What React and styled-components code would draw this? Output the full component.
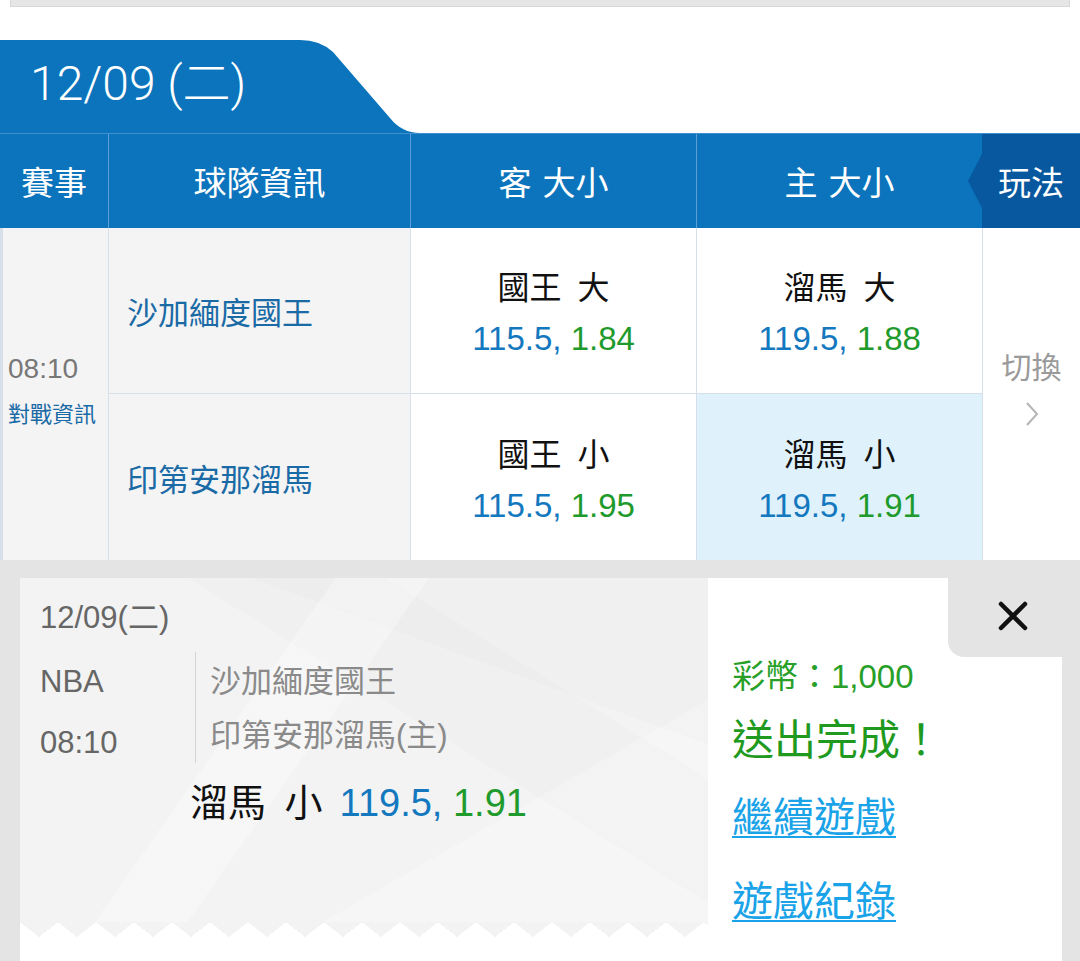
import React from 'react'
import styled, { createGlobalStyle } from 'styled-components'

const GlobalStyle = createGlobalStyle`
  html, body { margin: 0; padding: 0; background: #fff; }
  body { font-family: "Liberation Sans", "Noto Sans CJK TC", sans-serif; }
  * { box-sizing: border-box; }
`

const blue = '#0b74bc'
const numBlue = '#1478bf'
const numGreen = '#1f9a2c'

const Page = styled.div`
  width: 1080px;
  overflow: hidden;
`
const TopStrip = styled.div`
  margin: 0 10px;
  height: 7px;
  background: #e6e6e6;
  border: 1px solid #d8d8d8;
  border-top: none;
`
const Tab = styled.div`
  margin-top: 33px;
  width: 420px;
  height: 93px;
  background: ${blue};
  clip-path: path('M0 0 H300 Q320 0 333 12 L390 78 Q402 93 420 93 H0 Z');
  color: #fff;
  font-family: Roboto, "Noto Sans CJK TC", sans-serif;
  font-weight: 300;
  font-size: 48px;
  line-height: 87px;
  padding-left: 30px;
`
const HeadRow = styled.div`
  display: grid;
  grid-template-columns: 108px 302px 286px 286px 98px;
  height: 95px;
  background: ${blue};
  border-top: 1px solid #3f8fcf;
`
const HeadCell = styled.div`
  position: relative;
  display: flex;
  align-items: center;
  justify-content: center;
  color: #fff;
  font-size: 33px;
  word-spacing: 2px;
  border-left: ${p => (p.$first ? 'none' : '1px solid #5b9fd6')};
  background: ${p => (p.$dark ? '#07589f' : 'transparent')};

  ${p => p.$dark && `
    border-left: none;
    &::before {
      content: '';
      position: absolute;
      left: -14px;
      top: 18px;
      width: 15px;
      height: 58px;
      background: #07589f;
      clip-path: polygon(100% 0, 0 50%, 100% 100%);
    }
  `}
`
const Board = styled.div`
  display: grid;
  grid-template-columns: 108px 302px 286px 286px 98px;
  grid-template-rows: 166px 166px;
`
const MatchCell = styled.div`
  grid-column: 1;
  grid-row: 1 / span 2;
  background: #f4f4f4;
  border-left: 3px solid #d7e0e8;
  display: flex;
  flex-direction: column;
  justify-content: center;
  padding: 0 0 6px 5px;
`
const Time = styled.div`
  color: #777;
  font-size: 28px;
  line-height: 34px;
`
const VsInfo = styled.div`
  color: #1a6aa6;
  font-size: 22px;
  line-height: 30px;
  margin-top: 14px;
`
const TeamCell = styled.div`
  background: #f4f4f4;
  border-left: 1px solid #d7e0e8;
  border-bottom: ${p => (p.$top ? '1px solid #d7e0e8' : 'none')};
  display: flex;
  align-items: center;
  padding-left: 18px;
  color: #1a6aa6;
  font-size: 31px;
`
const OddsCell = styled.div`
  background: ${p => (p.$picked ? '#dff2fb' : '#fff')};
  border-left: 1px solid #d7e0e8;
  border-bottom: ${p => (p.$top ? '1px solid #d7e0e8' : 'none')};
  display: flex;
  flex-direction: column;
  align-items: center;
  justify-content: center;
  padding-top: 6px;
  gap: 7px;
`
const OddsLabel = styled.div`
  color: #111;
  font-size: 32px;
  line-height: 44px;
  word-spacing: 7px;
`
const OddsNums = styled.div`
  font-size: 33px;
  line-height: 44px;
`
const Line = styled.span`
  color: ${numBlue};
`
const Price = styled.span`
  color: ${numGreen};
`
const SwitchCell = styled.div`
  grid-column: 5;
  grid-row: 1 / span 2;
  background: #fff;
  border-left: 1px solid #d7e0e8;
  display: flex;
  flex-direction: column;
  align-items: center;
  justify-content: center;
  gap: 12px;
  color: #9a9a9a;
  font-size: 30px;
  line-height: 40px;
  padding-bottom: 12px;
`
const Bottom = styled.div`
  background: #e4e4e4;
  padding: 18px 18px 0 20px;
`
const Ticket = styled.div`
  display: flex;
  background: #fff;
  min-height: 420px;
`
const TicketLeft = styled.div`
  width: 688px;
  display: flex;
  flex-direction: column;
`
const TicketBody = styled.div`
  height: 344px;
  padding: 20px 0 0 20px;
  background:
    linear-gradient(125deg, rgba(255,255,255,0) 0 34%, rgba(255,255,255,.3) 34% 44%, rgba(255,255,255,0) 44%),
    linear-gradient(200deg, rgba(0,0,0,.01) 0 28%, rgba(0,0,0,0) 28%),
    linear-gradient(32deg, rgba(0,0,0,0) 0 58%, rgba(0,0,0,.01) 58% 74%, rgba(0,0,0,0) 74%),
    linear-gradient(150deg, rgba(0,0,0,0) 0 70%, rgba(255,255,255,.25) 70%),
    #f3f3f3;
`
const Zigzag = styled.div`
  height: 15px;
  background: conic-gradient(from -52deg at 50% 100%, #f3f3f3 104deg, transparent 0) 0 0 / 38px 15px repeat-x;
`
const DateLine = styled.div`
  color: #666;
  font-size: 31px;
  line-height: 40px;
`
const InfoBlock = styled.div`
  display: flex;
  margin-top: 14px;
`
const MetaCol = styled.div`
  width: 155px;
  padding-top: 10px;
  display: flex;
  flex-direction: column;
  gap: 21px;
  color: #666;
  font-size: 31px;
  line-height: 40px;
`
const TeamsCol = styled.div`
  border-left: 1px solid #d4d4d4;
  padding: 10px 0 0 14px;
  display: flex;
  flex-direction: column;
  gap: 14px;
  color: #8a8a8a;
  font-size: 31px;
  line-height: 40px;
`
const PickLine = styled.div`
  margin: 15px 0 0 150px;
  font-size: 38px;
  line-height: 50px;
  color: #111;
`
const PickLabel = styled.span`
  word-spacing: 8px;
  margin-right: 17px;
`
const TicketRight = styled.div`
  flex: 1;
  display: flex;
  flex-direction: column;
`
const CloseRow = styled.div`
  display: flex;
  justify-content: flex-end;
`
const CloseButton = styled.div`
  width: 114px;
  height: 79px;
  background: #e4e4e4;
  border-bottom-left-radius: 16px;
  display: flex;
  align-items: center;
  justify-content: center;
  padding: 0 0 4px 16px;
`
const Result = styled.div`
  padding-left: 24px;
  display: flex;
  flex-direction: column;
`
const Coins = styled.div`
  color: #28a028;
  font-size: 33px;
  line-height: 40px;
`
const Done = styled.div`
  color: #1f9a1f;
  font-size: 42px;
  line-height: 56px;
  margin-top: 16px;
`
const LinkText = styled.a`
  color: #1aa3e8;
  font-size: 41px;
  line-height: 56px;
  text-decoration: underline;
  text-decoration-thickness: 2px;
  text-underline-offset: 4px;
  margin-top: ${p => p.$gap}px;
`

const rows = [
  {
    team: '沙加緬度國王',
    away: { label: '國王 大', line: '115.5', odds: '1.84' },
    home: { label: '溜馬 大', line: '119.5', odds: '1.88' },
  },
  {
    team: '印第安那溜馬',
    away: { label: '國王 小', line: '115.5', odds: '1.95' },
    home: { label: '溜馬 小', line: '119.5', odds: '1.91', picked: true },
  },
]

function Odds({ item, top }) {
  return (
    <OddsCell $top={top} $picked={item.picked}>
      <OddsLabel>{item.label}</OddsLabel>
      <OddsNums>
        <Line>{item.line}, </Line>
        <Price>{item.odds}</Price>
      </OddsNums>
    </OddsCell>
  )
}

export default function App() {
  return (
    <Page>
      <GlobalStyle />
      <TopStrip />
      <Tab>12/09 (二)</Tab>
      <HeadRow>
        <HeadCell $first>賽事</HeadCell>
        <HeadCell>球隊資訊</HeadCell>
        <HeadCell>客 大小</HeadCell>
        <HeadCell>主 大小</HeadCell>
        <HeadCell $dark>玩法</HeadCell>
      </HeadRow>
      <Board>
        <MatchCell>
          <Time>08:10</Time>
          <VsInfo>對戰資訊</VsInfo>
        </MatchCell>
        {rows.map((r, i) => (
          <React.Fragment key={r.team}>
            <TeamCell $top={i === 0}>{r.team}</TeamCell>
            <Odds item={r.away} top={i === 0} />
            <Odds item={r.home} top={i === 0} />
          </React.Fragment>
        ))}
        <SwitchCell>
          <span>切換</span>
          <svg width="16" height="28" viewBox="0 0 16 28">
            <polyline points="3,3 13,14 3,25" fill="none" stroke="#b5b5b5" strokeWidth="2" />
          </svg>
        </SwitchCell>
      </Board>
      <Bottom>
        <Ticket>
          <TicketLeft>
            <TicketBody>
              <DateLine>12/09(二)</DateLine>
              <InfoBlock>
                <MetaCol>
                  <span>NBA</span>
                  <span>08:10</span>
                </MetaCol>
                <TeamsCol>
                  <span>沙加緬度國王</span>
                  <span>印第安那溜馬(主)</span>
                </TeamsCol>
              </InfoBlock>
              <PickLine>
                <PickLabel>溜馬 小</PickLabel>
                <Line>119.5, </Line>
                <Price>1.91</Price>
              </PickLine>
            </TicketBody>
            <Zigzag />
          </TicketLeft>
          <TicketRight>
            <CloseRow>
              <CloseButton>
                <svg width="30" height="30" viewBox="0 0 30 30">
                  <path d="M3 3 L27 27 M27 3 L3 27" stroke="#111" strokeWidth="4.5" strokeLinecap="round" />
                </svg>
              </CloseButton>
            </CloseRow>
            <Result>
              <Coins>彩幣：1,000</Coins>
              <Done>送出完成！</Done>
              <LinkText $gap={21}>繼續遊戲</LinkText>
              <LinkText $gap={28}>遊戲紀錄</LinkText>
            </Result>
          </TicketRight>
        </Ticket>
      </Bottom>
    </Page>
  )
}
